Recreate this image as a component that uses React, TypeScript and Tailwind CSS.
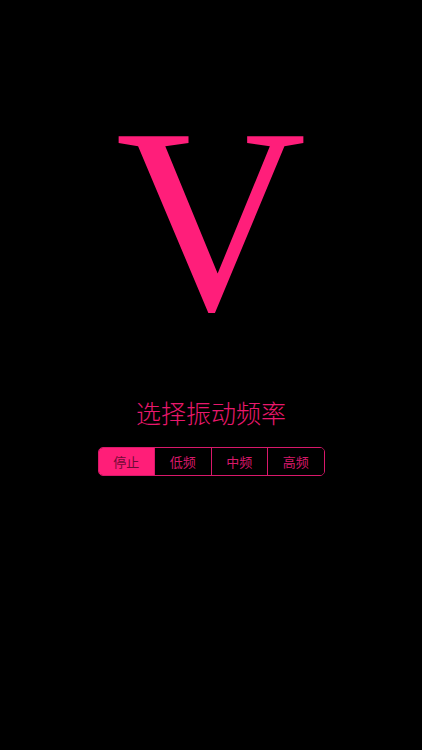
import React, { useState } from "react";

const options = ["停止", "低频", "中频", "高频"];

export default function App() {
  const [active, setActive] = useState(0);

  return (
    <div
      className="w-[422px] h-[750px] bg-black flex flex-col items-center"
      style={{ fontFamily: '"Noto Sans CJK SC", "Noto Sans", sans-serif' }}
    >
      {/* 大字母 */}
      <div
        className="mt-[70px] h-[300px] text-[264px] leading-[300px] text-[#ff1e7a] select-none"
        style={{ fontFamily: '"Liberation Serif", "Times New Roman", serif' }}
      >
        V
      </div>

      <div className="mt-[26px] text-[25px] leading-[32px] font-light text-[#e8186c]">
        选择振动频率
      </div>

      {/* 频率选择 */}
      <div className="mt-[19px] flex w-[227px] h-[29px] border border-[#d8186a] rounded-[5px] overflow-hidden">
        {options.map((o, i) => (
          <button
            key={o}
            onClick={() => setActive(i)}
            className={`flex-1 flex items-center justify-center text-[13px] ${
              i > 0 ? "border-l border-[#d8186a]" : ""
            } ${
              active === i
                ? "bg-[#ff1e78] text-[#6e0b35]"
                : "bg-black text-[#d8186a]"
            }`}
          >
            {o}
          </button>
        ))}
      </div>
    </div>
  );
}
